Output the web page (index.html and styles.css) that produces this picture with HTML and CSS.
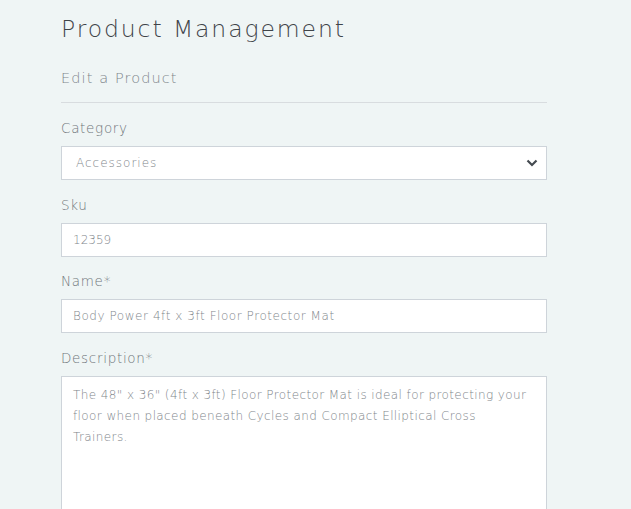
FILE: index.html
```html
<!DOCTYPE html>
<html lang="en">
<head>
<meta charset="utf-8">
<title>Product Management</title>
<link rel="stylesheet" href="styles.css">
</head>
<body>
<main class="page">
  <h1 class="title">Product Management</h1>
  <h2 class="subtitle">Edit a Product</h2>
  <hr class="rule">
  <form class="form">
    <div class="group">
      <label class="label" for="category">Category</label>
      <div class="select-wrap">
        <select id="category" class="control select">
          <option>Accessories</option>
        </select>
        <svg class="chevron" width="12" height="8" viewBox="0 0 12 8" aria-hidden="true"><path d="M1.5 1.5 L6 6 L10.5 1.5" fill="none" stroke="#444a50" stroke-width="2.2"/></svg>
      </div>
    </div>
    <div class="group">
      <label class="label" for="sku">Sku</label>
      <input id="sku" class="control sku" type="text" value="12359">
    </div>
    <div class="group">
      <label class="label" for="name">Name*</label>
      <input id="name" class="control" type="text" value="Body Power 4ft x 3ft Floor Protector Mat">
    </div>
    <div class="group">
      <label class="label" for="desc">Description*</label>
      <textarea id="desc" class="control textarea">The 48" x 36" (4ft x 3ft) Floor Protector Mat is ideal for protecting your floor when placed beneath Cycles and Compact Elliptical Cross Trainers.</textarea>
    </div>
  </form>
</main>
</body>
</html>
```
FILE: styles.css
```css
html, body {
  margin: 0;
  padding: 0;
  background: #eff5f5;
}
body {
  font-family: "DejaVu Sans", "Open Sans", sans-serif;
  color: #6d7378;
}
.page {
  width: 486px;
  margin-left: 61px;
  padding-top: 13px;
}
.title {
  margin: 0;
  font-weight: 200;
  font-size: 23.5px;
  line-height: 32px;
  letter-spacing: 1.9px;
  color: #3f4449;
}
.subtitle {
  margin: 22px 0 0;
  font-weight: 200;
  font-size: 14.5px;
  line-height: 22px;
  letter-spacing: 1.1px;
  color: #80868c;
}
.rule {
  margin: 13px 0 0;
  border: 0;
  border-top: 1px solid #d8dcdf;
  height: 0;
}
.form {
  margin-top: 15px;
}
.group {
  display: flex;
  flex-direction: column;
  margin-bottom: 14.6px;
}
.label {
  font-size: 13.5px;
  line-height: 21px;
  margin-bottom: 7px;
  letter-spacing: 0.7px;
  color: #6f757b;
  font-weight: 200;
}
.control {
  box-sizing: border-box;
  width: 100%;
  height: 34px;
  margin: 0;
  border: 1px solid #ced4da;
  border-radius: 0;
  background: #fff;
  font-family: "DejaVu Sans", sans-serif;
  font-size: 12px;
  font-weight: 200;
  letter-spacing: 0.55px;
  color: #80868b;
  padding: 0 11px;
  outline: none;
}
.sku {
  letter-spacing: 0;
}
.select-wrap {
  position: relative;
}
.select {
  appearance: none;
  -webkit-appearance: none;
  padding-left: 14px;
  letter-spacing: 1px;
}
.chevron {
  position: absolute;
  right: 9px;
  top: 13px;
  pointer-events: none;
}
.textarea {
  height: 160px;
  padding: 8px 18px 6px 11px;
  line-height: 21px;
  resize: none;
  font-size: 12px;
  letter-spacing: 0.4px;
}
```
